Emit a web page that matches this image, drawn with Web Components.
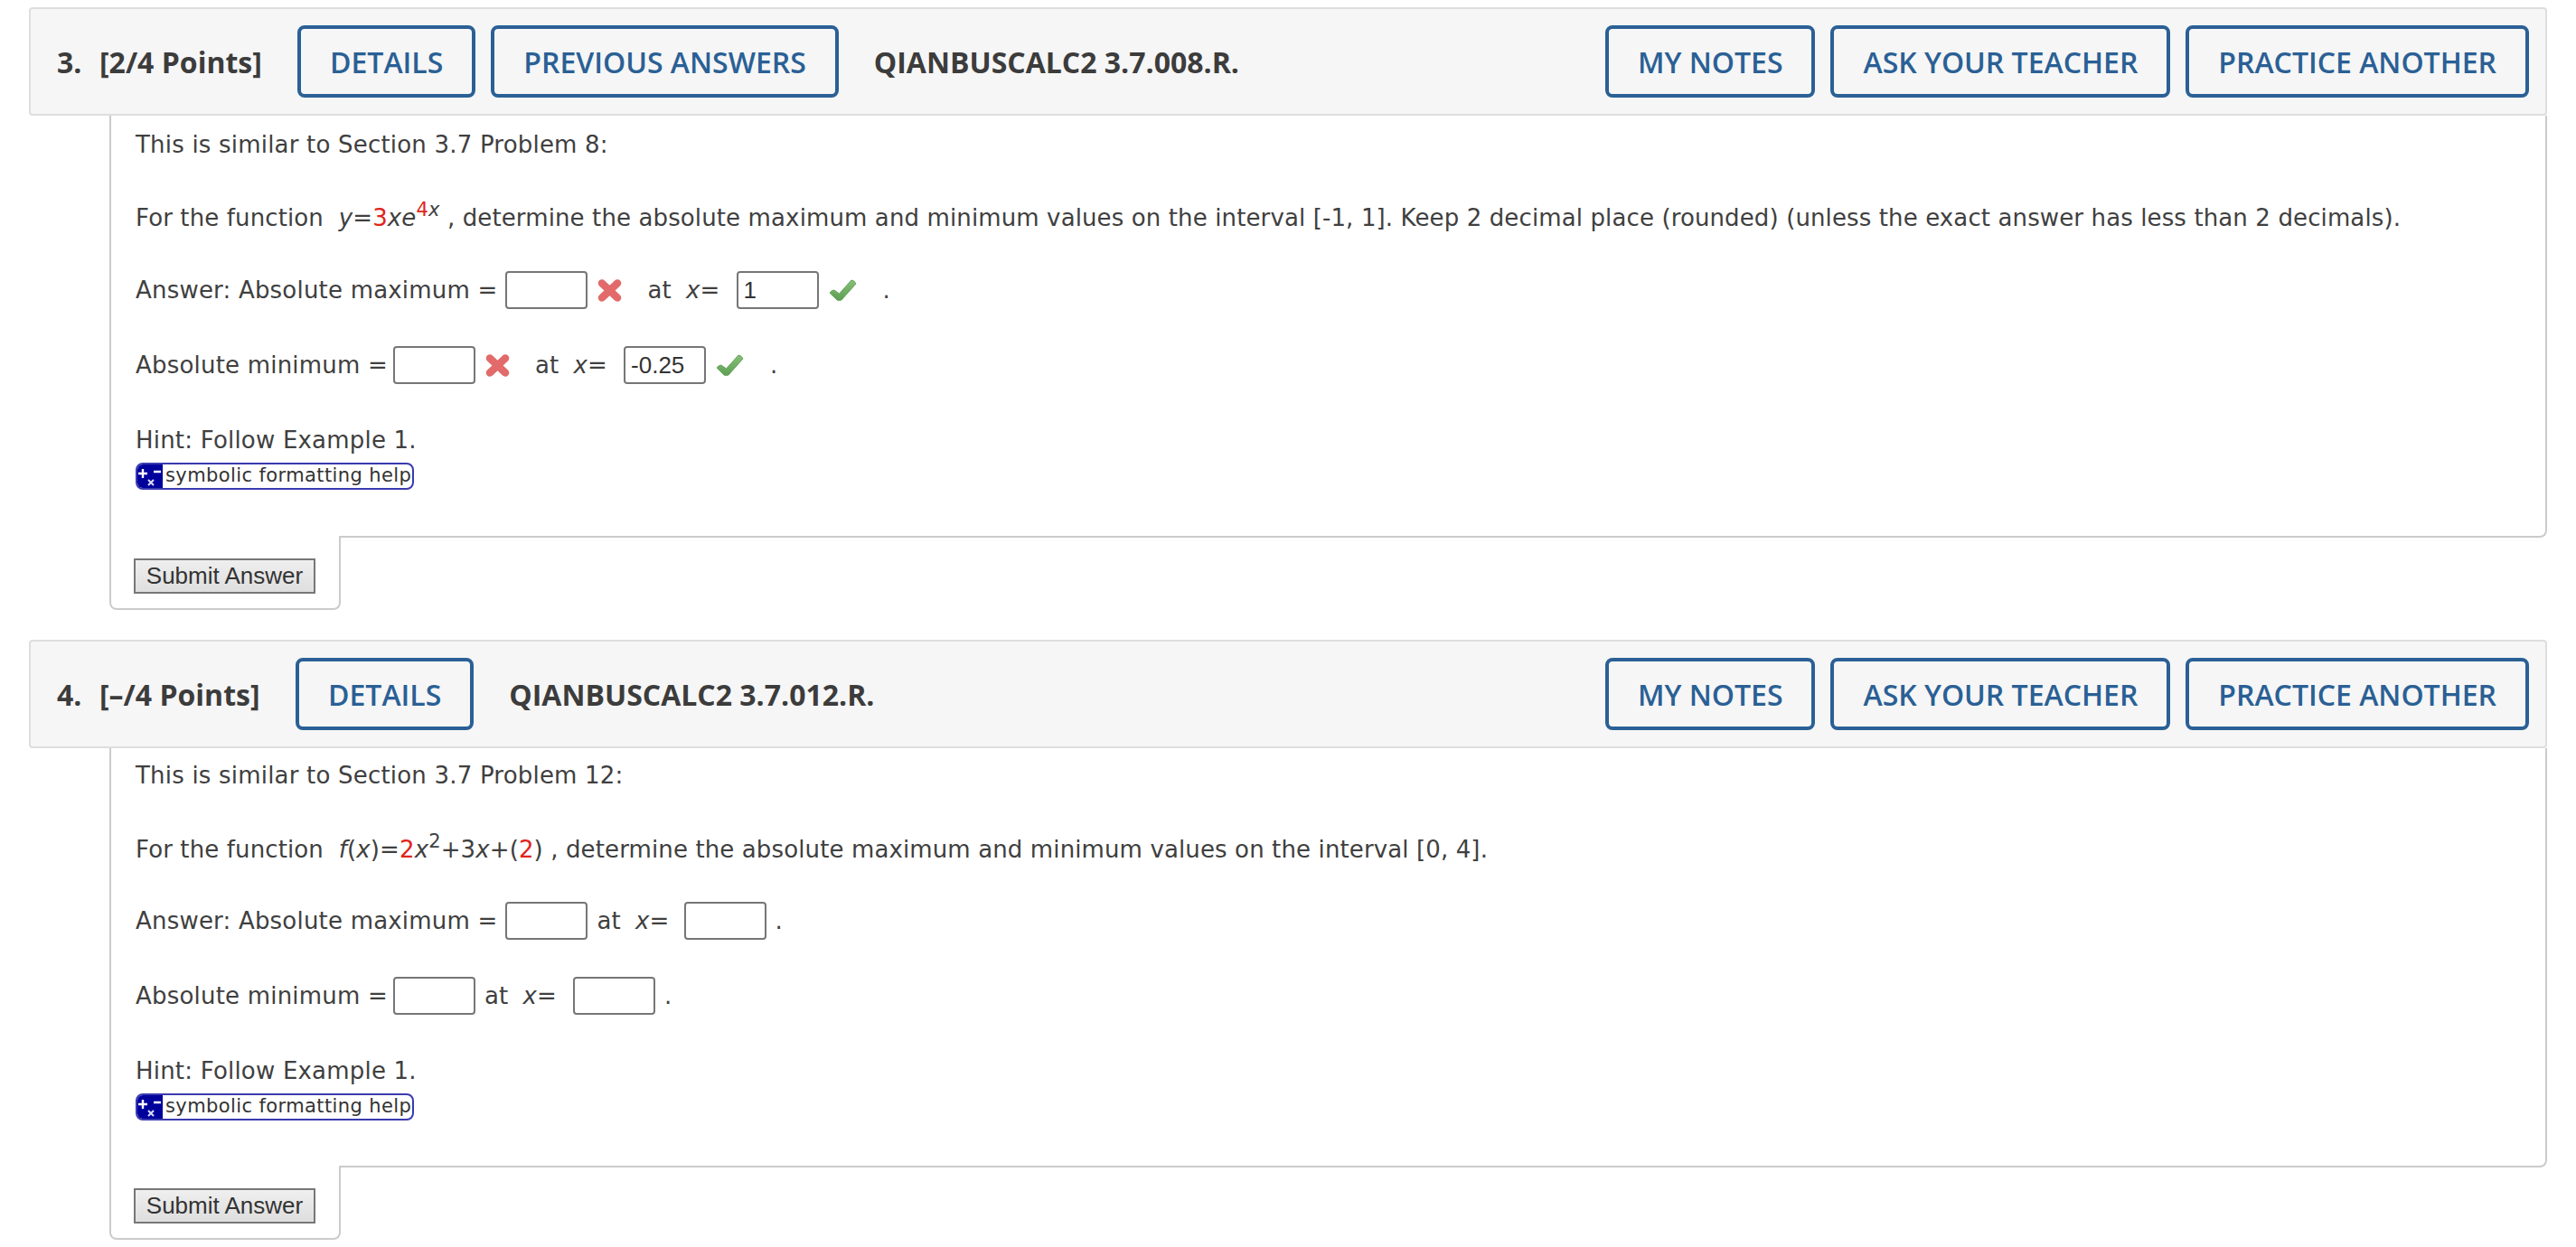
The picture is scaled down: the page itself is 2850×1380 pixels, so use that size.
<!DOCTYPE html>
<html>
<head>
<meta charset="utf-8">
<title>Questions</title>
<style>
  body {
    margin: 0;
    padding: 8px 32px 0;
    background: #fff;
    font-family: "DejaVu Sans", Verdana, sans-serif;
    font-size: 26px;
    letter-spacing: 0.2px;
    color: #404040;
  }
  em { font-style: italic; }
  .red { color: #e0251b; }
  sup { font-size: 21px; line-height: 0; vertical-align: 11px; }
</style>
</head>
<body>

<question-card number="3." points="[2/4 Points]" code="QIANBUSCALC2 3.7.008.R.">
  <wa-button slot="left">DETAILS</wa-button>
  <wa-button slot="left">PREVIOUS ANSWERS</wa-button>
  <prob-line>This is similar to Section 3.7 Problem 8:</prob-line>
  <prob-line style="margin-top:47px;letter-spacing:0.12px">For the function &nbsp;<em>y</em>=<span class="red">3</span><em>x</em><em>e</em><sup><span class="red">4</span><em>x</em></sup> , determine the absolute maximum and minimum values on the interval [-1, 1]. Keep 2 decimal place (rounded) (unless the exact answer has less than 2 decimals).</prob-line>
  <answer-row style="margin-top:42px">
    <span>Answer: Absolute maximum =</span>
    <answer-field state="wrong" style="margin-left:9px"></answer-field>
    <span style="margin-left:27px">at</span><span style="margin-left:16px"><em>x</em>=</span>
    <answer-field state="right" value="1" style="margin-left:18px"></answer-field>
    <span style="margin-left:29px">.</span>
  </answer-row>
  <answer-row style="margin-top:41px">
    <span>Absolute minimum =</span>
    <answer-field state="wrong" style="margin-left:6px"></answer-field>
    <span style="margin-left:27px">at</span><span style="margin-left:16px"><em>x</em>=</span>
    <answer-field state="right" value="-0.25" style="margin-left:18px"></answer-field>
    <span style="margin-left:29px">.</span>
  </answer-row>
  <prob-line style="margin-top:45px">Hint: Follow Example 1.</prob-line>
  <symbolic-help></symbolic-help>
</question-card>

<question-card number="4." points="[–/4 Points]" code="QIANBUSCALC2 3.7.012.R." style="margin-top:33px;--points-w:217px;--main-h:464px;--main-top:13px">
  <wa-button slot="left">DETAILS</wa-button>
  <prob-line>This is similar to Section 3.7 Problem 12:</prob-line>
  <prob-line style="margin-top:48px;letter-spacing:0.12px">For the function &nbsp;<em>f</em>(<em>x</em>)=<span class="red">2</span><em>x</em><sup>2</sup>+3<em>x</em>+(<span class="red">2</span>) , determine the absolute maximum and minimum values on the interval [0, 4].</prob-line>
  <answer-row style="margin-top:41px">
    <span>Answer: Absolute maximum =</span>
    <answer-field style="margin-left:9px"></answer-field>
    <span style="margin-left:10px">at</span><span style="margin-left:16px"><em>x</em>=</span>
    <answer-field style="margin-left:16px"></answer-field>
    <span style="margin-left:10px">.</span>
  </answer-row>
  <answer-row style="margin-top:41px">
    <span>Absolute minimum =</span>
    <answer-field style="margin-left:6px"></answer-field>
    <span style="margin-left:10px">at</span><span style="margin-left:16px"><em>x</em>=</span>
    <answer-field style="margin-left:18px"></answer-field>
    <span style="margin-left:10px">.</span>
  </answer-row>
  <prob-line style="margin-top:45px">Hint: Follow Example 1.</prob-line>
  <symbolic-help></symbolic-help>
</question-card>

<script>
class WaButton extends HTMLElement {
  constructor() {
    super();
    this.attachShadow({ mode: 'open' });
    this.shadowRoot.innerHTML = `
      <style>
        :host {
          display: inline-flex;
          align-items: center;
          box-sizing: border-box;
          height: 80px;
          padding: 0 32px;
          border: 4px solid #2a6095;
          border-radius: 8px;
          color: #2a6095;
          font-family: "Open Sans", sans-serif;
          font-size: 32px;
          font-weight: 600;
          letter-spacing: 0;
          white-space: nowrap;
        }
      </style>
      <slot></slot>
    `;
  }
}
customElements.define('wa-button', WaButton);

class ProbLine extends HTMLElement {
  constructor() {
    super();
    this.attachShadow({ mode: 'open' });
    this.shadowRoot.innerHTML = `
      <style>
        :host {
          display: block;
          line-height: 34px;
          white-space: nowrap;
        }
      </style>
      <slot></slot>
    `;
  }
}
customElements.define('prob-line', ProbLine);

class AnswerRow extends HTMLElement {
  constructor() {
    super();
    this.attachShadow({ mode: 'open' });
    this.shadowRoot.innerHTML = `
      <style>
        :host {
          display: flex;
          align-items: center;
          height: 42px;
          white-space: nowrap;
        }
      </style>
      <slot></slot>
    `;
  }
}
customElements.define('answer-row', AnswerRow);

const MARKS = {
  wrong: `<svg width="29" height="27" viewBox="0 0 29 27">
      <path d="M6 5.5 L23 21.5 M23 5.5 L6 21.5" stroke="#e26a6a" stroke-width="8.5" stroke-linecap="round" fill="none"/>
    </svg>`,
  right: `<svg width="32" height="26" viewBox="0 0 32 26">
      <defs><linearGradient id="r" x1="0" y1="0" x2="0" y2="1"><stop offset="0" stop-color="#86c077"/><stop offset="1" stop-color="#5d9f54"/></linearGradient></defs>
      <path d="M2 16 Q4 13 7 13 L12.500 17 L26 2 Q29 2 31 6 L15 24 Q12 25 10 24 Z" fill="url(#r)" stroke="#6aa65f" stroke-width="1" stroke-linejoin="round"/>
    </svg>`
};

class AnswerField extends HTMLElement {
  constructor() {
    super();
    this.attachShadow({ mode: 'open' });
    const state = this.getAttribute('state');
    this.shadowRoot.innerHTML = `
      <style>
        :host {
          display: inline-flex;
          align-items: center;
        }
        #box {
          box-sizing: border-box;
          width: 91px;
          height: 42px;
          padding: 0 6px;
          border: 2px solid #767676;
          border-radius: 4px;
          background: #fff;
          font-family: "Liberation Sans", Arial, sans-serif;
          font-size: 26px;
          line-height: 38px;
          letter-spacing: 0;
          color: #333;
        }
        svg {
          display: block;
          margin-left: 10px;
        }
      </style>
      <div id="box">${this.getAttribute('value') || ''}</div>
      ${state ? MARKS[state] : ''}
    `;
  }
}
customElements.define('answer-field', AnswerField);

class SymbolicHelp extends HTMLElement {
  constructor() {
    super();
    this.attachShadow({ mode: 'open' });
    this.shadowRoot.innerHTML = `
      <style>
        :host {
          display: flex;
          box-sizing: border-box;
          width: 308px;
          height: 30px;
          margin-top: 8px;
          border: 2px solid #3a3ab0;
          border-radius: 8px;
          overflow: hidden;
          background: #fff;
        }
        svg {
          flex: none;
          display: block;
          width: 28px;
          height: 26px;
          background: #00009c;
        }
        span {
          padding-left: 3px;
          font-family: "DejaVu Sans", sans-serif;
          font-size: 21px;
          line-height: 25px;
          letter-spacing: 0.4px;
          color: #333;
          white-space: nowrap;
        }
      </style>
      <svg viewBox="0 0 28 26">
        <path d="M6 5 V15 M1 10 H11 M18 8 H26" stroke="#fff" stroke-width="2.4" fill="none"/>
        <path d="M12 17 L18 23 M18 17 L12 23" stroke="#dcdcf4" stroke-width="2" fill="none"/>
      </svg>
      <span>symbolic formatting help</span>
    `;
  }
}
customElements.define('symbolic-help', SymbolicHelp);

class QuestionCard extends HTMLElement {
  constructor() {
    super();
    this.attachShadow({ mode: 'open' });
    this.shadowRoot.innerHTML = `
      <style>
        :host {
          display: block;
        }
        header {
          display: flex;
          align-items: center;
          box-sizing: border-box;
          height: 120px;
          padding: 0 18px 0 29px;
          border: 2px solid #dedede;
          border-radius: 4px;
          background: #f6f6f6;
          font-family: "Open Sans", sans-serif;
          font-weight: 700;
          font-size: 32px;
          letter-spacing: 0;
          color: #3c3c3c;
          white-space: nowrap;
        }
        #num { width: 47px; }
        #points { width: var(--points-w, 219px); }
        .group { display: flex; gap: 17px; }
        #code { margin-left: 39px; margin-right: auto; }
        #main {
          box-sizing: border-box;
          height: var(--main-h, 467px);
          margin-left: 89px;
          padding: var(--main-top, 15px) 0 0 27px;
          border: 2px solid #cbcbcb;
          border-top: 0;
          border-radius: 0 0 8px 0;
        }
        #tab {
          box-sizing: border-box;
          width: 256px;
          height: 82px;
          margin: -2px 0 0 89px;
          padding-top: 25px;
          padding-left: 25px;
          border: 2px solid #cbcbcb;
          border-top: 0;
          border-radius: 0 0 8px 8px;
          background: #fff;
        }
        button {
          display: block;
          box-sizing: border-box;
          width: 201px;
          height: 39px;
          padding: 0;
          border: 2px solid #777;
          border-radius: 0;
          background: linear-gradient(#efefef, #dedede);
          font-family: "Liberation Sans", Arial, sans-serif;
          font-size: 26px;
          color: #333;
        }
      </style>
      <header>
        <span id="num">${this.getAttribute('number')}</span>
        <span id="points">${this.getAttribute('points')}</span>
        <div class="group"><slot name="left"></slot></div>
        <span id="code">${this.getAttribute('code')}</span>
        <div class="group">
          <wa-button>MY NOTES</wa-button>
          <wa-button>ASK YOUR TEACHER</wa-button>
          <wa-button>PRACTICE ANOTHER</wa-button>
        </div>
      </header>
      <div id="main"><slot></slot></div>
      <div id="tab"><button>Submit Answer</button></div>
    `;
  }
}
customElements.define('question-card', QuestionCard);
</script>
</body>
</html>
